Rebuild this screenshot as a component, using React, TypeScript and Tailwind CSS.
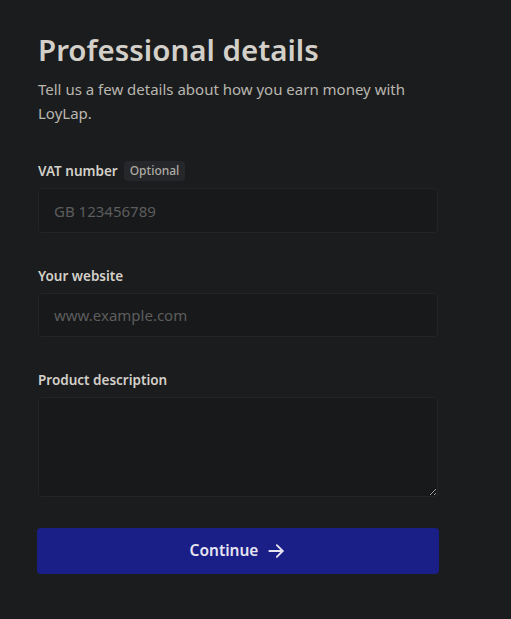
import React from "react";

export default function App() {
  return (
    <div className="min-h-[619px] w-full bg-[#1b1c1e] pl-[38px] pt-[30px] font-['Noto_Sans',sans-serif]">
      <div className="w-[400px]">
        <h1 className="text-[29.5px] font-semibold leading-[40px] text-[#d3d0c9]">Professional details</h1>
        <p className="mt-[7px] text-[15px] leading-[24px] text-[#b9b6af]">
          Tell us a few details about how you earn money with LoyLap.
        </p>

        <div className="mt-[36px] flex items-center gap-[6px]">
          <span className="text-[13.5px] font-semibold text-[#d3d0c9]">VAT number</span>
          <span className="rounded-[4px] bg-[#26272a] px-[6px] py-[1px] text-[12px] font-medium text-[#aeaba4]">Optional</span>
        </div>
        <input
          className="mt-[7px] block h-[45px] w-[400px] rounded-[4px] border border-[#232427] bg-[#18191b] px-[15px] text-[15px] text-[#d3d0c9] placeholder:text-[#5d5d5d] outline-none"
          placeholder="GB 123456789"
        />

        <div className="mt-[33px] text-[13.5px] font-semibold text-[#d3d0c9]">Your website</div>
        <input
          className="mt-[6px] block h-[44px] w-[400px] rounded-[4px] border border-[#232427] bg-[#18191b] px-[15px] text-[15px] text-[#d3d0c9] placeholder:text-[#5d5d5d] outline-none"
          placeholder="www.example.com"
        />

        <div className="mt-[33px] text-[13.5px] font-semibold text-[#d3d0c9]">Product description</div>
        <textarea className="mt-[7px] block h-[100px] w-[400px] rounded-[4px] border border-[#232427] bg-[#18191b] px-[15px] py-[10px] text-[15px] text-[#d3d0c9] outline-none" />

        <button className="mt-[31px] -ml-[1px] flex h-[46px] w-[402px] items-center justify-center gap-[8px] rounded-[4px] bg-[#1a1f88] text-[15.5px] font-semibold text-[#e6e4f0]">
          Continue
          <svg width="20" height="20" viewBox="0 0 24 24" fill="none" stroke="currentColor" strokeWidth="2.2" strokeLinecap="round" strokeLinejoin="round">
            <path d="M4 12h16" />
            <path d="M13 5l7 7-7 7" />
          </svg>
        </button>
      </div>
    </div>
  );
}
